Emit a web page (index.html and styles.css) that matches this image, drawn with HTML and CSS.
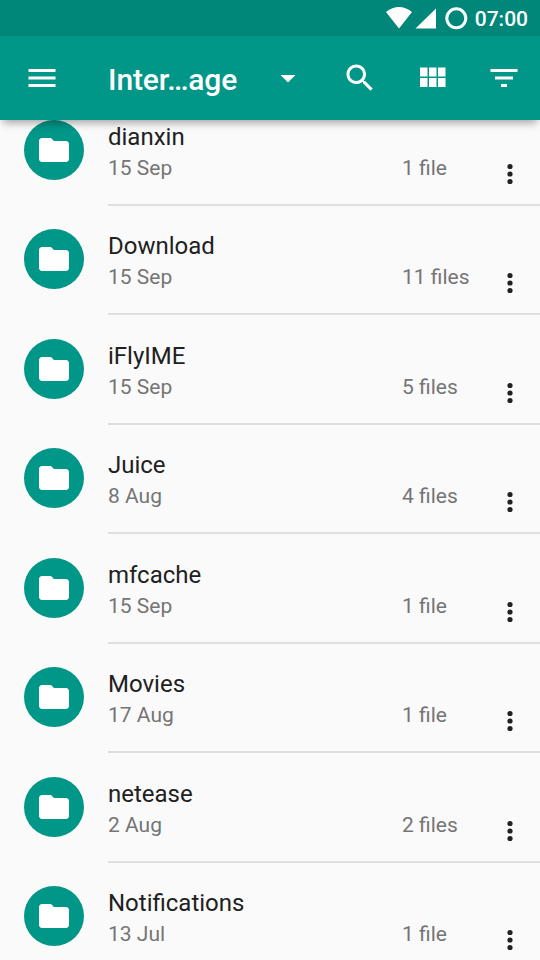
FILE: index.html
```html
<!DOCTYPE html>
<html lang="en">
<head>
<meta charset="utf-8">
<title>File manager</title>
<link rel="stylesheet" href="styles.css">
</head>
<body>
<svg class="defs" width="0" height="0" aria-hidden="true">
  <symbol id="folder" viewBox="0 0 24 24"><path d="M10 4H4c-1.100 0-2 .9-2 2v12c0 1.100.9 2 2 2h16c1.100 0 2-.9 2-2V8c0-1.100-.9-2-2-2h-8z"/></symbol>
  <symbol id="more" viewBox="0 0 10 22"><circle cx="5" cy="3.500" r="2.600"/><circle cx="5" cy="11" r="2.600"/><circle cx="5" cy="18.500" r="2.600"/></symbol>
</svg>
<header class="header">
  <div class="status">
    <svg width="84" height="24" viewBox="0 0 84 24">
      <path d="M0 6Q13 -4 26 6L13 22.500z"/>
      <path d="M50 2.500v20H29.500z"/>
      <circle class="ring" cx="70.300" cy="12.300" r="9.500"/>
    </svg>
    <span class="time">07:00</span>
  </div>
  <nav class="toolbar">
    <svg class="icon" viewBox="0 0 24 24"><path d="M3 18h18v-2H3zM3 13h18v-2H3zM3 6v2h18V6z"/></svg>
    <h1 class="title">Inter…age</h1>
    <svg class="icon arrow" viewBox="0 0 24 24"><path d="M7 10l5 5 5-5z"/></svg>
    <svg class="icon search" viewBox="0 0 24 24"><path d="M15.500 14h-.79l-.28-.27C15.410 12.590 16 11.110 16 9.500 16 5.910 13.090 3 9.500 3S3 5.910 3 9.500 5.910 16 9.500 16c1.610 0 3.090-.59 4.230-1.570l.27.28v.79l5 4.990L20.490 19zM9.500 14C7.010 14 5 11.990 5 9.500S7.010 5 9.500 5 14 7.010 14 9.500 11.990 14 9.500 14z"/></svg>
    <svg class="icon grid" viewBox="0 0 24 24"><path d="M4 11h5V5H4zM4 18h5v-6H4zM10 18h5v-6h-5zM16 18h5v-6h-5zM10 11h5V5h-5zM16 5v6h5V5z"/></svg>
    <svg class="icon sort" viewBox="0 0 24 24"><path d="M10 18h4v-2h-4zM3 6v2h18V6zM6 13h12v-2H6z"/></svg>
  </nav>
</header>
<main class="list">
  <article class="row"><span class="avatar"><svg><use href="#folder"/></svg></span><div class="body"><div class="text"><h2>dianxin</h2><p><span class="date">15 Sep</span><span>1 file</span></p></div><svg class="more"><use href="#more"/></svg></div></article>
  <article class="row"><span class="avatar"><svg><use href="#folder"/></svg></span><div class="body"><div class="text"><h2>Download</h2><p><span class="date">15 Sep</span><span>11 files</span></p></div><svg class="more"><use href="#more"/></svg></div></article>
  <article class="row"><span class="avatar"><svg><use href="#folder"/></svg></span><div class="body"><div class="text"><h2>iFlyIME</h2><p><span class="date">15 Sep</span><span>5 files</span></p></div><svg class="more"><use href="#more"/></svg></div></article>
  <article class="row"><span class="avatar"><svg><use href="#folder"/></svg></span><div class="body"><div class="text"><h2>Juice</h2><p><span class="date">8 Aug</span><span>4 files</span></p></div><svg class="more"><use href="#more"/></svg></div></article>
  <article class="row"><span class="avatar"><svg><use href="#folder"/></svg></span><div class="body"><div class="text"><h2>mfcache</h2><p><span class="date">15 Sep</span><span>1 file</span></p></div><svg class="more"><use href="#more"/></svg></div></article>
  <article class="row"><span class="avatar"><svg><use href="#folder"/></svg></span><div class="body"><div class="text"><h2>Movies</h2><p><span class="date">17 Aug</span><span>1 file</span></p></div><svg class="more"><use href="#more"/></svg></div></article>
  <article class="row"><span class="avatar"><svg><use href="#folder"/></svg></span><div class="body"><div class="text"><h2>netease</h2><p><span class="date">2 Aug</span><span>2 files</span></p></div><svg class="more"><use href="#more"/></svg></div></article>
  <article class="row"><span class="avatar"><svg><use href="#folder"/></svg></span><div class="body"><div class="text"><h2>Notifications</h2><p><span class="date">13 Jul</span><span>1 file</span></p></div><svg class="more"><use href="#more"/></svg></div></article>
</main>
</body>
</html>
```

FILE: styles.css
```css
* {
  box-sizing: border-box;
  margin: 0;
  padding: 0;
}

body {
  height: 960px;
  display: flex;
  flex-direction: column;
  overflow: hidden;
  background: #fafafa;
  color: #212121;
  font-family: Roboto, "Liberation Sans", sans-serif;
}

svg {
  display: block;
  flex: none;
}

.defs {
  display: none;
}

.header {
  position: relative;
  z-index: 1;
  flex: none;
  height: 120px;
  color: #fff;
  background: #009688;
  box-shadow: 0 6px 8px -3px rgba(0, 0, 0, 0.34);
}

.header svg {
  fill: #fff;
}

.status {
  display: flex;
  justify-content: flex-end;
  align-items: center;
  gap: 5px;
  height: 36px;
  padding-right: 12px;
  background: #00877a;
}

.ring {
  fill: none;
  stroke: #fff;
  stroke-width: 3px;
}

.time {
  padding-top: 2px;
  font-size: 21px;
  font-weight: 500;
  line-height: 36px;
}

.toolbar {
  display: flex;
  align-items: center;
  height: 84px;
  padding: 0 18px 0 24px;
}

.icon {
  width: 36px;
  height: 36px;
}

.title {
  width: 162px;
  margin-left: 48px;
  padding-top: 4px;
  font-size: 30px;
  font-weight: 500;
  letter-spacing: -0.12px;
  line-height: 36px;
  white-space: nowrap;
}

.search {
  margin-left: 36px;
}

.grid,
.sort {
  margin-left: 36px;
}

.list {
  flex: none;
  margin-top: -24.2px;
}

.row {
  display: flex;
  height: 109.5px;
  padding-left: 24px;
}

.avatar {
  display: grid;
  place-items: center;
  flex: none;
  width: 60px;
  height: 60px;
  margin: 24px 24px 0 0;
  border-radius: 50%;
  background: #009688;
}

.avatar svg {
  width: 36px;
  height: 36px;
  fill: #fff;
}

.body {
  display: flex;
  flex: 1;
  height: 110px;
  border-bottom: 2px solid #dfdfdf;
}

.text {
  flex: 1;
  padding-top: 26px;
}

h2 {
  font-size: 24px;
  font-weight: 400;
  line-height: 30px;
}

p {
  display: flex;
  padding-top: 1px;
  color: #757575;
  font-size: 21px;
  line-height: 31px;
}

.date {
  width: 294px;
}

.more {
  width: 10px;
  height: 22px;
  margin: 67px 25px 0 0;
  fill: #212121;
}
```
